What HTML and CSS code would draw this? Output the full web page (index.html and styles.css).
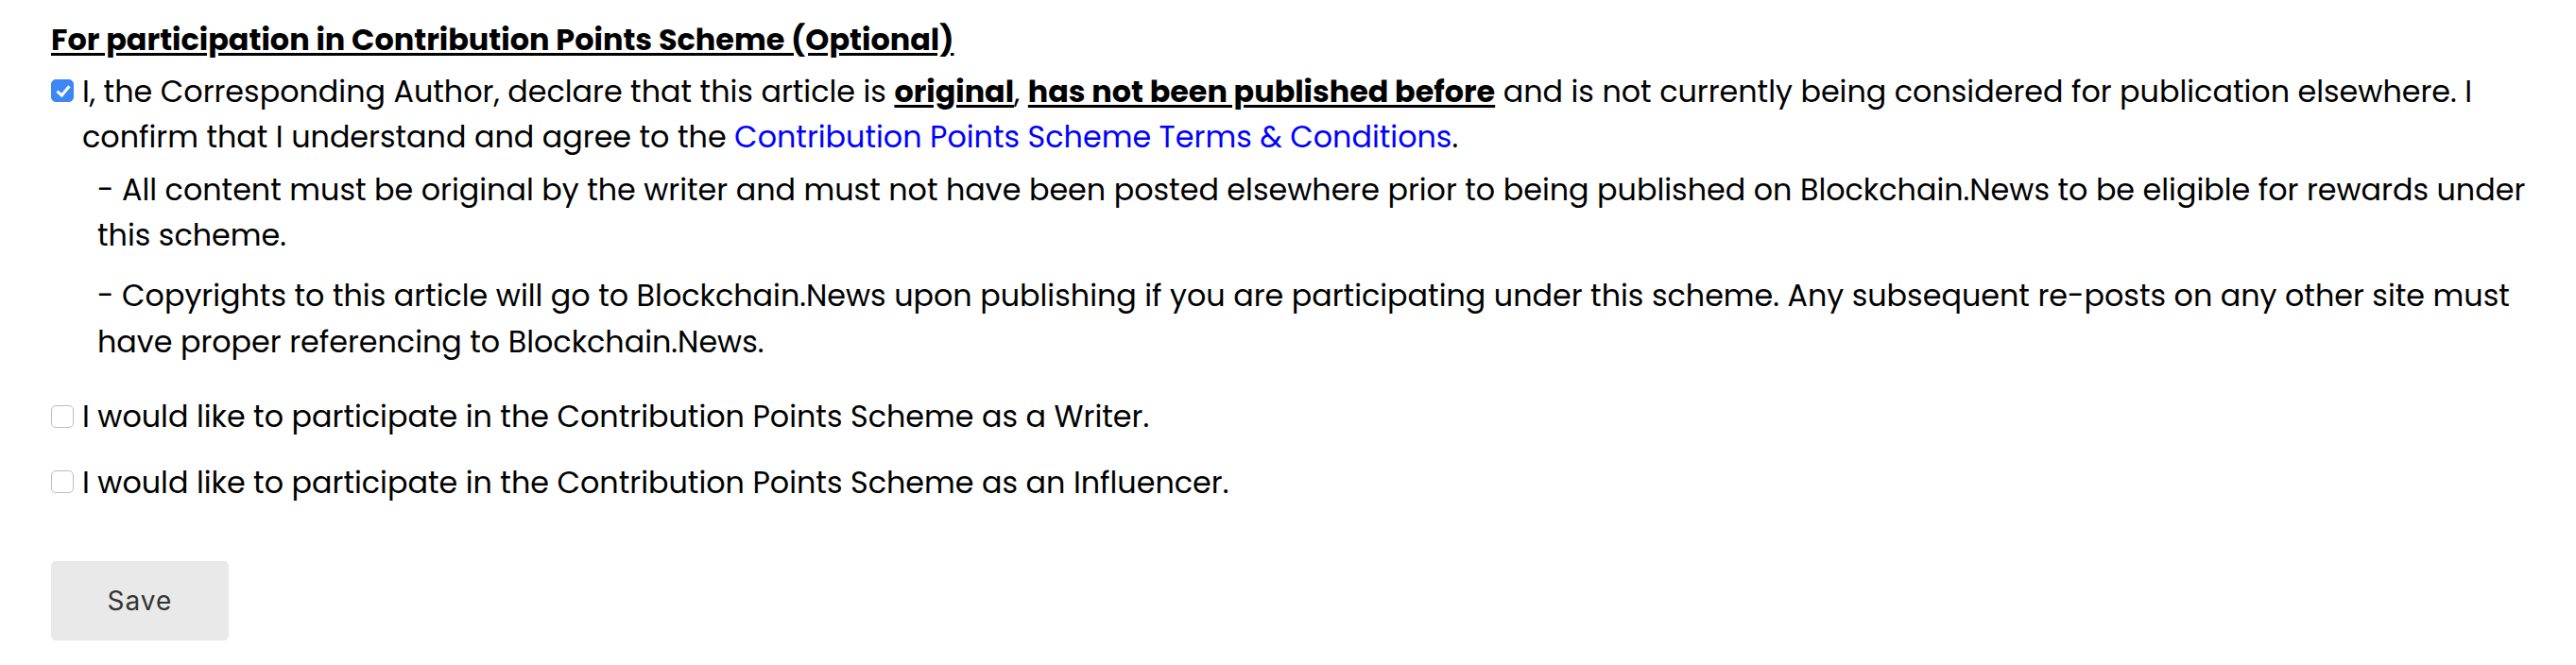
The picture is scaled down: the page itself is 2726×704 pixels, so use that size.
FILE: index.html
```html
<!DOCTYPE html>
<html lang="en">
<head>
  <meta charset="UTF-8">
  <meta name="viewport" content="width=device-width, initial-scale=1.0">
  <title>Contribution Points Scheme</title>
  <link rel="stylesheet" href="styles.css">
</head>
<body>
  <form class="scheme-form" onsubmit="return false;">
    <h3 class="scheme-title">For participation in Contribution Points Scheme (Optional)</h3>

    <label class="check-row declare-row">
      <input type="checkbox" class="scheme-check" checked>
      <span class="check-text">I, the Corresponding Author, declare that this article is <strong class="mark">original</strong>, <strong class="mark">has not been published before</strong> and is not currently being considered for publication elsewhere. I confirm that I understand and agree to the <a href="#" class="terms-link">Contribution Points Scheme Terms &amp; Conditions</a>.</span>
    </label>

    <div class="scheme-notes">
      <p>- All content must be original by the writer and must not have been posted elsewhere prior to being published on Blockchain.News to be eligible for rewards under this scheme.</p>
      <p>- Copyrights to this article will go to Blockchain.News upon publishing if you are participating under this scheme. Any subsequent re-posts on any other site must have proper referencing to Blockchain.News.</p>
    </div>

    <label class="check-row writer-row">
      <input type="checkbox" class="scheme-check">
      <span class="check-text">I would like to participate in the Contribution Points Scheme as a Writer.</span>
    </label>

    <label class="check-row influencer-row">
      <input type="checkbox" class="scheme-check">
      <span class="check-text">I would like to participate in the Contribution Points Scheme as an Influencer.</span>
    </label>

    <button type="submit" class="save-btn">Save</button>
  </form>
</body>
</html>
```

FILE: styles.css
```css
html, body {
  margin: 0;
  padding: 0;
  background: #fff;
}
.scheme-form {
  padding: 18px 30px 0 54px;
  font-family: "Poppins", "Inter", sans-serif;
  font-size: 31.8px;
  line-height: 48.6px;
  color: #000;
}
.scheme-title {
  margin: 0;
  font-size: 31.9px;
  font-weight: 700;
  line-height: 48.6px;
  text-decoration: underline;
  text-underline-offset: 3px;
}
.check-row {
  display: flex;
  align-items: flex-start;
  gap: 9px;
}
.declare-row {
  margin-top: 6px;
}
.writer-row {
  margin-top: 31px;
}
.influencer-row {
  margin-top: 21px;
}
.scheme-check {
  appearance: none;
  -webkit-appearance: none;
  flex: none;
  position: relative;
  width: 24px;
  height: 24px;
  margin: 11.5px 0 0 0;
  border: 1.5px solid #bdbdbd;
  border-radius: 5px;
  background: #fff;
  box-sizing: border-box;
}
.scheme-check:checked {
  background: #3d86f6;
  border-color: #3d86f6;
}
.scheme-check:checked::after {
  content: "";
  position: absolute;
  left: 7.5px;
  top: 3px;
  width: 5px;
  height: 11px;
  border: solid #fff;
  border-width: 0 3px 3px 0;
  transform: rotate(40deg);
}
.mark {
  font-weight: 700;
  text-decoration: underline;
  text-underline-offset: 3px;
}
.terms-link {
  color: #0000ff;
  text-decoration: none;
}
.scheme-notes {
  padding-left: 49px;
}
.scheme-notes p {
  margin: 15px 0 0 0;
}
.scheme-notes p:first-child {
  margin-top: 7px;
}
.save-btn {
  display: block;
  margin-top: 59px;
  width: 188px;
  height: 84px;
  padding: 0;
  border: none;
  border-radius: 5px;
  background: #e9e9e9;
  color: #333;
  font-family: "Inter", sans-serif;
  font-size: 28px;
  letter-spacing: 1px;
  cursor: pointer;
}
```
